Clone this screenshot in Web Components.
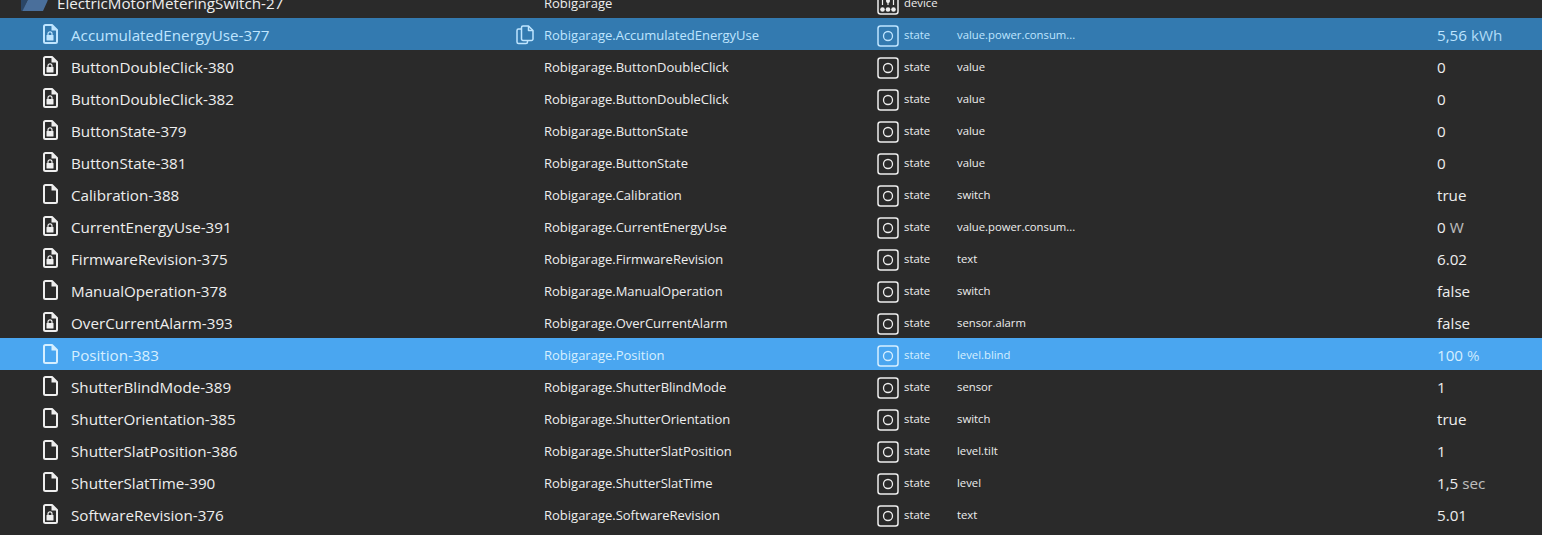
<!DOCTYPE html>
<html>
<head>
<meta charset="utf-8">
<style>
  html, body { margin: 0; height: 100%; background: #2a2a2a; overflow: hidden; }
</style>
</head>
<body>
<object-tree></object-tree>
<script>
const FONT = '"Open Sans", "Noto Sans", "Liberation Sans", sans-serif';

const sheet = '<path d="M3.500 1h6.500l5 5v11.500a1.500 1.500 0 0 1-1.500 1.500h-10a1.500 1.500 0 0 1-1.500-1.500v-15a1.500 1.500 0 0 1 1.500-1.500z" stroke-width="2"/><path d="M9.500 1v5.500h5.500z" fill="currentColor" stroke="none"/>';

const icons = {
  folder: `<svg width="28" height="20" viewBox="0 0 28 20"><path d="M1 2h8l2 2h11v3H8L3 19H2a1 1 0 0 1-1-1z" fill="#2b4666"/><path d="M8 7.500h18.500a1 1 0 0 1 1 1.400L23 19H2.500z" fill="#4a6f9b"/></svg>`,
  file: `<svg width="16" height="20" viewBox="0 0 16 20" fill="none" stroke="currentColor" stroke-linejoin="round">${sheet}</svg>`,
  lock: `<svg width="16" height="20" viewBox="0 0 16 20" fill="none" stroke="currentColor" stroke-linejoin="round">${sheet}<rect x="4.500" y="11" width="7" height="5.500" rx=".5" fill="currentColor" stroke="none"/><path d="M6 11.500V9.800a2 2 0 0 1 4 0v1.700" stroke-width="1.200"/></svg>`,
  state: `<svg width="22" height="22" viewBox="0 0 22 22" fill="none" stroke="currentColor"><rect x="1" y="1" width="20" height="20" rx="2.500" stroke-width="1.500"/><circle cx="11" cy="11" r="4.500" stroke-width="1.300"/></svg>`,
  device: `<svg width="22" height="22" viewBox="0 0 22 22" fill="none" stroke="currentColor"><rect x="1" y="1" width="20" height="20" rx="2.500" stroke-width="1.500"/><path d="M5.500 5v7M11 5v7M16.500 5v7" stroke-width="1.200"/><g fill="currentColor" stroke="none"><circle cx="11" cy="8" r="2"/><circle cx="5.500" cy="16.500" r="2.300"/><circle cx="11" cy="16.500" r="2.300"/><circle cx="16.500" cy="16.500" r="2.300"/></g></svg>`,
  copy: `<svg width="18" height="20" viewBox="0 0 18 20" fill="none" stroke="currentColor" stroke-width="1.500" stroke-linejoin="round"><path d="M7 1h5.500L17 5.500V14a1.500 1.500 0 0 1-1.500 1.500H7A1.500 1.500 0 0 1 5.500 14V2.500A1.500 1.500 0 0 1 7 1z"/><path d="M12.500 1v4.500H17"/><path d="M5.500 4H2.500A1.500 1.500 0 0 0 1 5.500V17a1.500 1.500 0 0 0 1.500 1.500H10a1.500 1.500 0 0 0 1.500-1.500v-1.500"/></svg>`
};

class TreeRow extends HTMLElement {
  constructor() {
    super();
    this.attachShadow({ mode: "open" });
    const a = (n) => this.getAttribute(n) || "";
    const folder = a("kind") === "folder";
    const obj = a("obj") || "state";
    this.shadowRoot.innerHTML = `
      <style>
        :host {
          display: grid;
          grid-template-columns: 544px 333px 27px 53px 480px 1fr;
          height: 32px;
          align-items: center;
          font: 15.200px/20px ${FONT};
          color: #eeeeee;
          overflow: hidden;
        }
        :host([sel="1"]) { background: #337ab0; color: #bfe5ff; }
        :host([sel="2"]) { background: #4aa6f0; color: #d6efff; }
        .name { display: flex; align-items: center; position: relative; white-space: nowrap; padding-left: ${folder ? 20 : 42}px; }
        .name svg { flex: none; }
        .label { margin-left: ${folder ? 9 : 13}px; padding-top: 2px; }
        .copy { position: absolute; right: 10px; top: 2px; display: none; }
        :host([sel="1"]) .copy { display: block; }
        .id { font-size: 13px; padding-top: 2px; white-space: nowrap; }
        .ico { display: flex; padding-top: 3px; }
        .small { font-size: 11.300px; padding-top: 1px; white-space: nowrap; }
        .val { padding-top: 2px; white-space: nowrap; }
        .unit { opacity: .75; }
        :host([sel]) .unit { opacity: .9; }
        :host([sel="0"]) .unit { opacity: .75; }
      </style>
      <div class="name">${icons[a("kind")]}<span class="label">${a("name")}</span><span class="copy">${icons.copy}</span></div>
      <div class="id">${a("oid")}</div>
      <div class="ico">${icons[obj]}</div>
      <div class="small">${obj}</div>
      <div class="small">${a("role")}</div>
      <div class="val">${a("val")}${a("unit") ? ` <span class="unit">${a("unit")}</span>` : ""}</div>`;
  }
}

class ObjectTree extends HTMLElement {
  constructor() {
    super();
    this.attachShadow({ mode: "open" });
    const rows = [
      ["lock","AccumulatedEnergyUse-377","AccumulatedEnergyUse","value.power.consum...","5,56","kWh",1],
      ["lock","ButtonDoubleClick-380","ButtonDoubleClick","value","0"],
      ["lock","ButtonDoubleClick-382","ButtonDoubleClick","value","0"],
      ["lock","ButtonState-379","ButtonState","value","0"],
      ["lock","ButtonState-381","ButtonState","value","0"],
      ["file","Calibration-388","Calibration","switch","true"],
      ["lock","CurrentEnergyUse-391","CurrentEnergyUse","value.power.consum...","0","W"],
      ["lock","FirmwareRevision-375","FirmwareRevision","text","6.02"],
      ["file","ManualOperation-378","ManualOperation","switch","false"],
      ["lock","OverCurrentAlarm-393","OverCurrentAlarm","sensor.alarm","false"],
      ["file","Position-383","Position","level.blind","100","%",2],
      ["file","ShutterBlindMode-389","ShutterBlindMode","sensor","1"],
      ["file","ShutterOrientation-385","ShutterOrientation","switch","true"],
      ["file","ShutterSlatPosition-386","ShutterSlatPosition","level.tilt","1"],
      ["file","ShutterSlatTime-390","ShutterSlatTime","level","1,5","sec"],
      ["lock","SoftwareRevision-376","SoftwareRevision","text","5.01"]
    ];
    let html = `<style>
      :host { display: block; margin-top: -14px; }
    </style>
    <tree-row kind="folder" name="ElectricMotorMeteringSwitch-27" oid="Robigarage" obj="device"></tree-row>`;
    for (const r of rows) {
      html += `<tree-row kind="${r[0]}" name="${r[1]}" oid="Robigarage.${r[2]}" role="${r[3]}" val="${r[4]}" unit="${r[5] || ""}" sel="${r[6] || 0}"></tree-row>`;
    }
    this.shadowRoot.innerHTML = html;
  }
}

customElements.define("tree-row", TreeRow);
customElements.define("object-tree", ObjectTree);
</script>
</body>
</html>
